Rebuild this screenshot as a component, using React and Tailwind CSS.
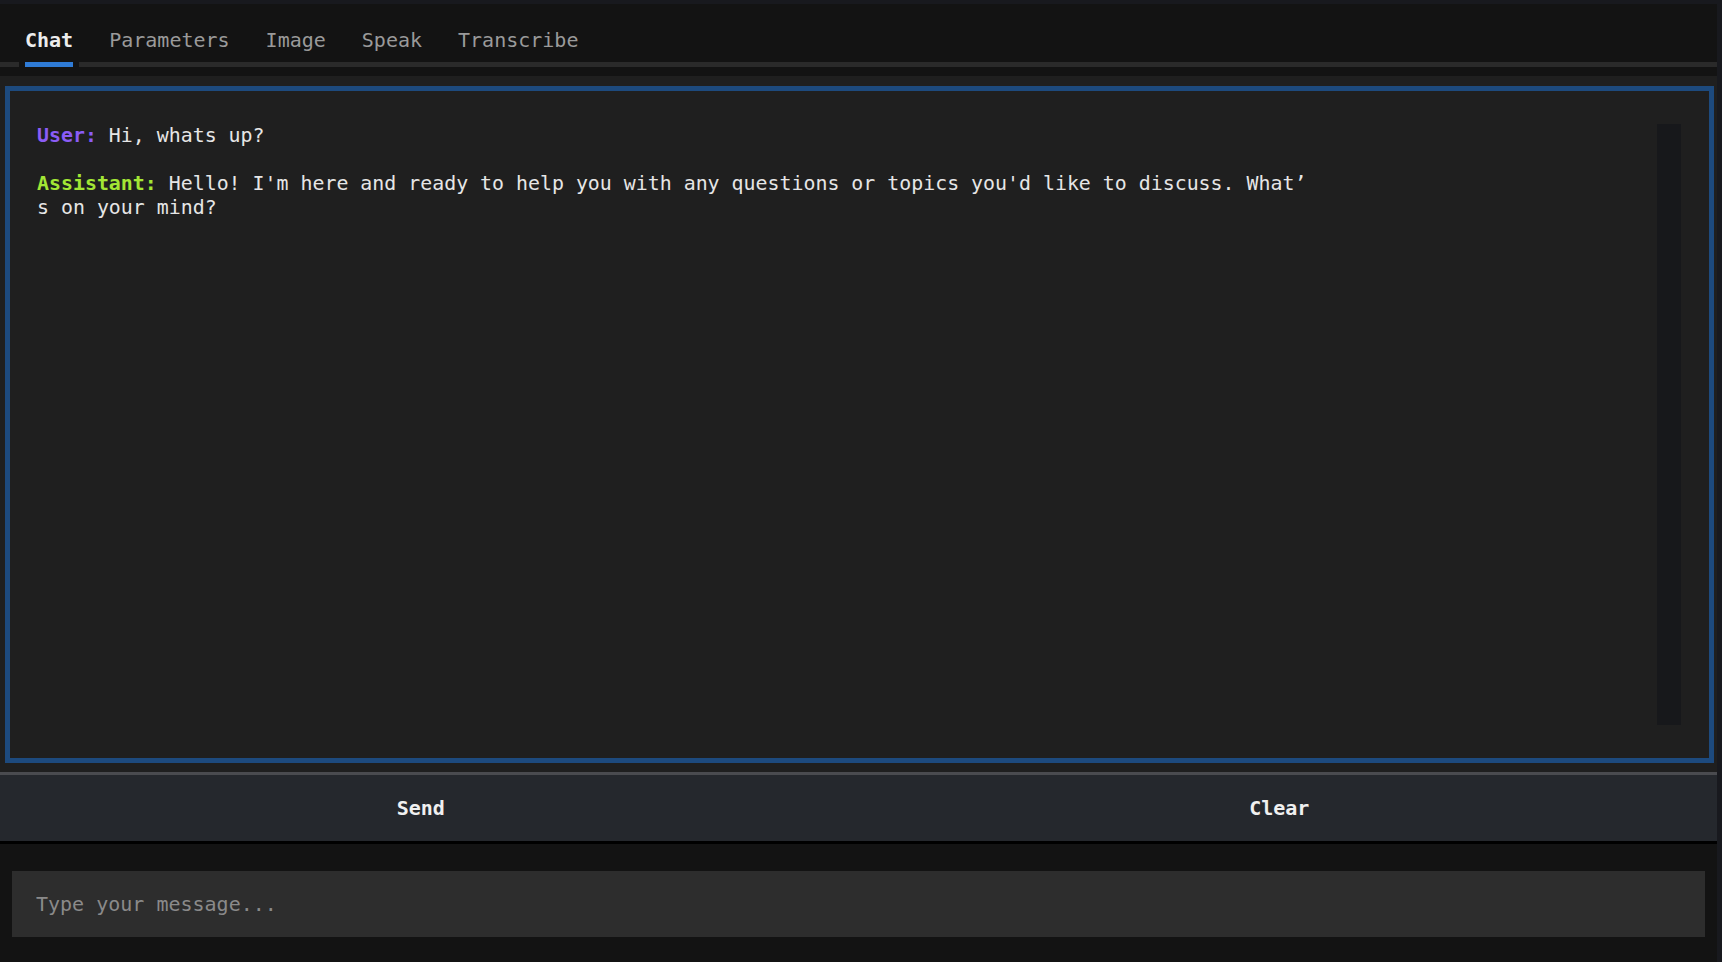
import React, { useState } from 'react';

const mono = { fontFamily: '"DejaVu Sans Mono", "Liberation Mono", monospace' };

const TABS = ['Chat', 'Parameters', 'Image', 'Speak', 'Transcribe'];

const App = () => {
  const [tab, setTab] = useState('Chat');
  const [message, setMessage] = useState('');

  return (
    <div className="w-full h-[962px] bg-[#18191e] pt-[4px] pr-[5px] flex flex-col" style={mono}>
      <div className="flex-1 flex flex-col bg-[#131313]">
        {/* Tabs */}
        <div className="h-[72px] flex flex-col">
          <div className="h-[58px] pt-[24px] pl-[25px] flex items-start gap-[36px]">
            {TABS.map((t) => (
              <button
                key={t}
                onClick={() => setTab(t)}
                className={
                  t === tab
                    ? 'text-[20px] leading-[24px] font-bold text-[#ececec]'
                    : 'text-[20px] leading-[24px] text-[#9a9a9a]'
                }
              >
                {t}
              </button>
            ))}
          </div>
          <div className="h-[5px] flex">
            <div className="w-[19px] bg-[#2a2a2a]" />
            <div className="w-[6px]" />
            <div className="w-[48px] bg-[#2f7bd6]" />
            <div className="w-[6px]" />
            <div className="flex-1 bg-[#2a2a2a]" />
          </div>
        </div>

        {/* Chat log */}
        <div className="bg-[#1f1f1f] pt-[10px] pb-[9px] pl-[5px] pr-[3px]">
          <div className="h-[677px] border-[5px] border-[#1d4a7e] flex">
            <div className="flex-1 pl-[27px] pt-[33px] text-[19.9px] leading-[24px] text-[#e6e6e6] whitespace-pre-wrap">
              <span className="font-bold text-[#8b5cf6]">User:</span> Hi, whats up?
              {'\n\n'}
              <span className="font-bold text-[#a3e635]">Assistant:</span>
              {" Hello! I'm here and ready to help you with any questions or topics you'd like to discuss. What’\ns on your mind?"}
            </div>
            <div className="w-[24px] my-[33px] mr-[28px] bg-[#17181b]" />
          </div>
        </div>

        {/* Buttons */}
        <div className="h-[72px] flex border-t-[3px] border-[#4a4b4f] border-b-[3px] border-b-black bg-[#25282d]">
          <button className="flex-1 pr-[17px] text-[20px] font-bold text-[#f0f0f0]">Send</button>
          <button className="flex-1 pr-[17px] text-[20px] font-bold text-[#f0f0f0]">Clear</button>
        </div>

        {/* Input */}
        <div className="flex-1 pt-[27px] px-[12px]">
          <input
            value={message}
            onChange={(e) => setMessage(e.target.value)}
            placeholder="Type your message..."
            className="w-full h-[66px] bg-[#2d2d2d] pl-[24px] text-[20px] text-[#e6e6e6] placeholder:text-[#8a8a8a] outline-none"
            style={mono}
          />
        </div>
      </div>
    </div>
  );
};

export default App;
